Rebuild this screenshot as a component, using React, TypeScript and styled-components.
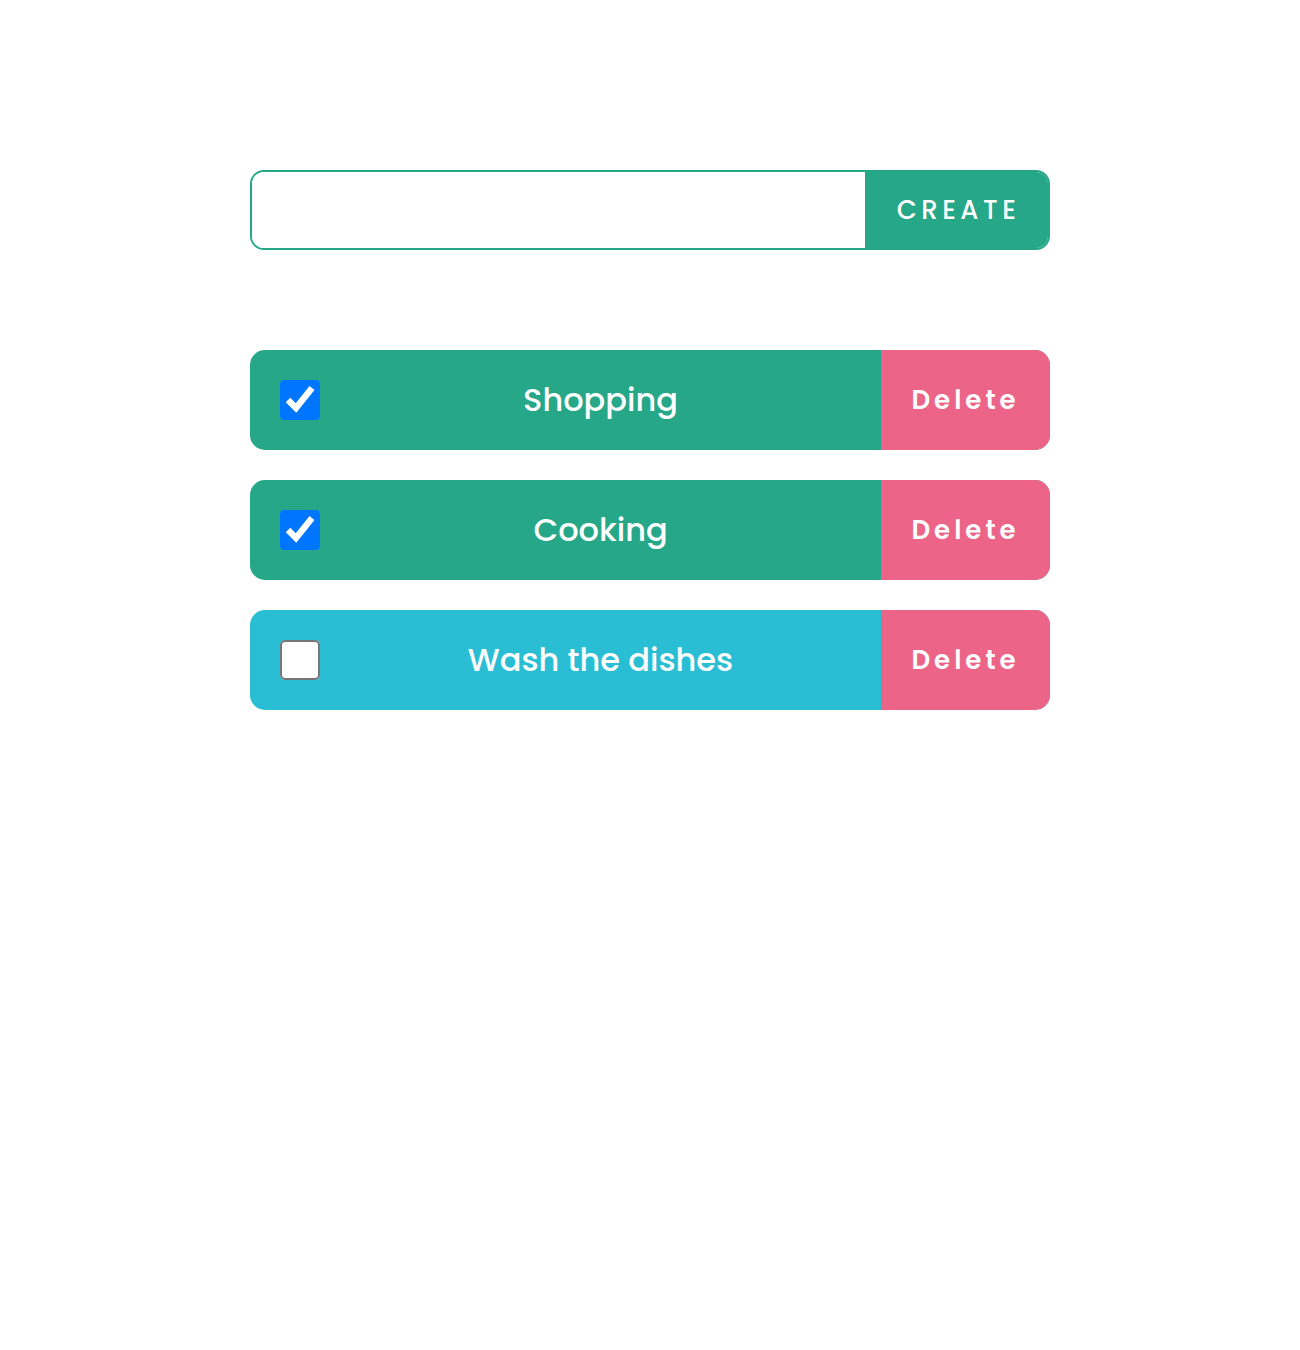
import styled, { createGlobalStyle } from 'styled-components';

const GlobalStyle = createGlobalStyle`
  body {
    margin: 0;
    background: #ffffff;
    font-family: 'Poppins', 'Open Sans', sans-serif;
  }
  * {
    box-sizing: border-box;
  }
`;

const Page = styled.main`
  width: 800px;
  margin: 0 auto;
  padding-top: 170px;
`;

const Form = styled.form`
  display: flex;
  height: 80px;
  border: 2px solid #25a788;
  border-radius: 14px;
  overflow: hidden;
  margin-bottom: 100px;
`;

const Input = styled.input`
  flex: 1;
  border: none;
  outline: none;
  padding: 0 20px;
  font-size: 24px;
  font-family: inherit;
`;

const CreateButton = styled.button`
  width: 183px;
  border: none;
  background-color: #25a788;
  color: #ffffff;
  font-family: inherit;
  font-size: 26px;
  font-weight: 500;
  letter-spacing: 4.5px;
  padding: 0 0 0 4px;
  cursor: pointer;
`;

const List = styled.ul`
  display: flex;
  flex-direction: column;
  gap: 30px;
  list-style: none;
  margin: 0;
  padding: 0;
`;

const Item = styled.li<{ done: boolean }>`
  display: flex;
  align-items: center;
  height: 100px;
  border-radius: 15px;
  overflow: hidden;
  background-color: ${props => (props.done ? '#25a788' : '#29bed4')};
  padding-left: 30px;
`;

const Check = styled.input`
  width: 20px;
  height: 20px;
  zoom: 2;
  margin: 0;
  flex-shrink: 0;
  cursor: pointer;
`;

const Title = styled.span`
  flex: 1;
  text-align: center;
  color: #ffffff;
  font-size: 32px;
  font-weight: 500;
`;

const DeleteButton = styled.button`
  align-self: stretch;
  width: 169px;
  border: none;
  background-color: #ec6589;
  color: #ffffff;
  font-family: inherit;
  font-size: 26px;
  font-weight: 600;
  letter-spacing: 4px;
  padding: 0;
  cursor: pointer;
`;

const todos = [
  { id: 1, title: 'Shopping', done: true },
  { id: 2, title: 'Cooking', done: true },
  { id: 3, title: 'Wash the dishes', done: false },
];

const App = () => {
  return (
    <>
      <GlobalStyle />
      <Page>
        <Form onSubmit={e => e.preventDefault()}>
          <Input type="text" />
          <CreateButton type="submit">CREATE</CreateButton>
        </Form>

        <List>
          {todos.map(todo => (
            <Item key={todo.id} done={todo.done}>
              <Check type="checkbox" defaultChecked={todo.done} />
              <Title>{todo.title}</Title>
              <DeleteButton type="button">Delete</DeleteButton>
            </Item>
          ))}
        </List>
      </Page>
    </>
  );
};

export default App;
